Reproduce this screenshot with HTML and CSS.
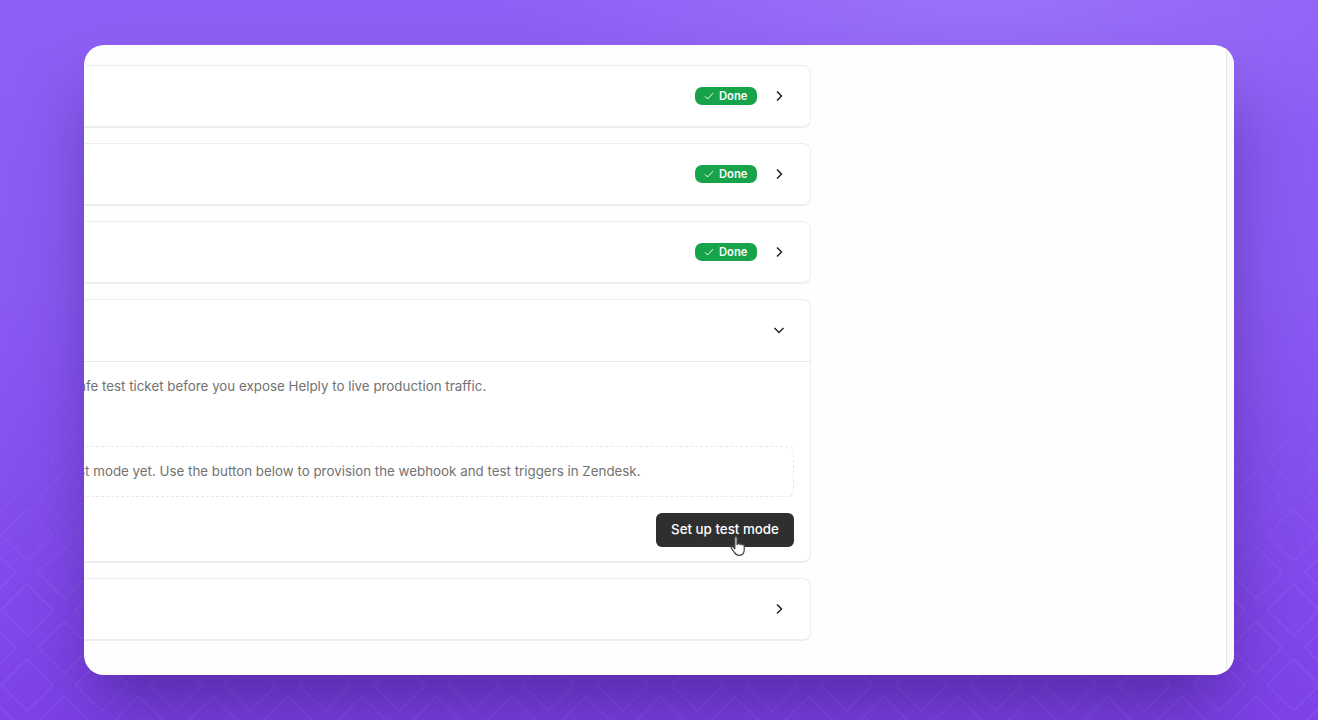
FILE: index.html
```html
<!DOCTYPE html>
<html>
<head>
  <title>Test mode setup</title>
  <link rel="stylesheet" href="styles.css">
</head>
<body>
  <svg class="pattern" width="1318" height="720">
    <defs>
      <pattern id="diamonds" width="74.5" height="75" patternUnits="userSpaceOnUse" x="-10" y="-16">
        <path d="M37 0 63 26 37 52 11 26Z M74.250 37.500 100.250 63.500 74.250 89.500 48.250 63.500Z M-.25 37.500 25.750 63.500 -.25 89.500 -26.250 63.500Z M74.250 -37.500 100.250 -11.500 74.250 14.500 48.250 -11.500Z M-.25 -37.500 25.750 -11.500 -.25 14.500 -26.250 -11.500Z" fill="none" stroke="#fff" stroke-opacity="0.065" stroke-width="1.5"/>
      </pattern>
    </defs>
    <rect width="1318" height="720" fill="url(#diamonds)"/>
  </svg>

  <div class="window">
    <div class="main">
      <div class="step">
        <div class="step-head">
          <span class="badge"><svg width="12" height="12" viewBox="0 0 12 12"><path d="M2 6.4 4.6 9 10 3.2" fill="none" stroke="#fff" stroke-width="1"/></svg>Done</span>
          <svg class="chevron" width="16" height="16" viewBox="0 0 16 16"><path d="M6 3.500 10.500 8 6 12.500"/></svg>
        </div>
      </div>
      <div class="step">
        <div class="step-head">
          <span class="badge"><svg width="12" height="12" viewBox="0 0 12 12"><path d="M2 6.4 4.6 9 10 3.2" fill="none" stroke="#fff" stroke-width="1"/></svg>Done</span>
          <svg class="chevron" width="16" height="16" viewBox="0 0 16 16"><path d="M6 3.500 10.500 8 6 12.500"/></svg>
        </div>
      </div>
      <div class="step">
        <div class="step-head">
          <span class="badge"><svg width="12" height="12" viewBox="0 0 12 12"><path d="M2 6.4 4.6 9 10 3.2" fill="none" stroke="#fff" stroke-width="1"/></svg>Done</span>
          <svg class="chevron" width="16" height="16" viewBox="0 0 16 16"><path d="M6 3.500 10.500 8 6 12.500"/></svg>
        </div>
      </div>
      <div class="step">
        <div class="step-head step-head-open">
          <svg class="chevron" width="16" height="16" viewBox="0 0 16 16"><path d="M3.500 6 8 10.500 12.500 6"/></svg>
        </div>
        <div class="step-body">
          <p class="step-text">Run a safe test ticket before you expose Helply to live production traffic.</p>
          <div class="notice">Zendesk is not in test mode yet. Use the button below to provision the webhook and test triggers in Zendesk.</div>
          <div class="actions">
            <button class="btn">Set up test mode
              <svg class="cursor" width="22" height="24" viewBox="0 0 20 22">
                <path d="M6.200 2.600c0-1.300 2-1.300 2 0v6l.6-.2c.1-1 1.900-1 2 .1l.1.3c.3-.8 1.900-.7 2 .3.4-.6 1.800-.4 1.900.7v3.600c0 3-1.700 5.200-4.500 5.200-2.300 0-3.500-1-4.500-2.700L3 12.200c-.7-1.100.8-2.200 1.700-1.200l1.500 1.600z" fill="#fff" stroke="#444" stroke-width="1.100" stroke-linejoin="round"/>
              </svg>
            </button>
          </div>
        </div>
      </div>
      <div class="step">
        <div class="step-head">
          <svg class="chevron" width="16" height="16" viewBox="0 0 16 16"><path d="M6 3.500 10.500 8 6 12.500"/></svg>
        </div>
      </div>
    </div>
    <div class="side"></div>
  </div>
</body>
</html>
```

FILE: styles.css
```css
html, body {
  margin: 0;
  height: 100%;
}

body {
  width: 1318px;
  height: 720px;
  overflow: hidden;
  box-sizing: border-box;
  padding: 45px 84px;
  position: relative;
  font-family: Inter, "Liberation Sans", sans-serif;
  background:
    radial-gradient(ellipse 480px 170px at 980px 0, #9a72f9 0%, rgba(154, 114, 249, 0) 100%),
    linear-gradient(180deg, #8e60f5 0%, #8a5af4 40%, #7d41e8 100%);
}

.pattern {
  position: absolute;
  top: 0;
  left: 0;
  -webkit-mask-image: linear-gradient(180deg, transparent 45%, #000 85%);
  mask-image: linear-gradient(180deg, transparent 45%, #000 85%);
}

.window {
  position: relative;
  height: 630px;
  display: flex;
  overflow: hidden;
  background-color: #fefefe;
  border-radius: 20px;
  box-shadow: 0 40px 70px -10px rgba(45, 20, 100, 0.5);
}

.main {
  flex: 1;
  padding-top: 20px;
  display: flex;
  flex-direction: column;
  gap: 15px;
  margin-left: -200px;
}

.side {
  width: 7px;
  border-left: 1px solid #e8e8e8;
  background-color: #fafafa;
}

.step {
  width: 927px;
  box-sizing: border-box;
  background-color: #fff;
  border: 1px solid #eeeeee;
  border-bottom-width: 2px;
  border-radius: 8px;
}

.step-head {
  height: 60px;
  box-sizing: border-box;
  padding-right: 23px;
  display: flex;
  align-items: center;
  justify-content: flex-end;
  gap: 15px;
}

.step-head-open {
  border-bottom: 1px solid #e8e8e8;
  height: 62px;
  padding-bottom: 1px;
}

.badge {
  display: flex;
  align-items: center;
  gap: 4px;
  height: 18px;
  width: 62px;
  box-sizing: border-box;
  padding-left: 8px;
  background-color: #16a34a;
  color: #fff;
  border-radius: 7px;
  font-size: 11.2px;
  font-weight: 600;
}

.chevron {
  margin-left: -1px;
}

.chevron path {
  fill: none;
  stroke: #222;
  stroke-width: 1.5;
}

.step-body {
  padding: 16px 16px 14px 40px;
}

.step-text {
  margin: 0 0 51px;
  padding-left: 107px;
  font-size: 13.35px;
  line-height: 17px;
  color: #727272;
}

.notice {
  height: 51px;
  box-sizing: border-box;
  display: flex;
  align-items: center;
  padding-left: 29px;
  padding-bottom: 2px;
  border: 1px dashed #e8e8e8;
  border-radius: 6px;
  font-size: 13.35px;
  color: #727272;
}

.actions {
  display: flex;
  justify-content: flex-end;
  margin-top: 16px;
}

.btn {
  position: relative;
  width: 138px;
  height: 34px;
  padding: 0 0 2px;
  border: none;
  border-radius: 6px;
  background-color: #2f2f30;
  color: #fff;
  font-family: inherit;
  font-size: 13.35px;
  font-weight: 500;
}

.cursor {
  position: absolute;
  left: 72px;
  top: 22px;
}
```
